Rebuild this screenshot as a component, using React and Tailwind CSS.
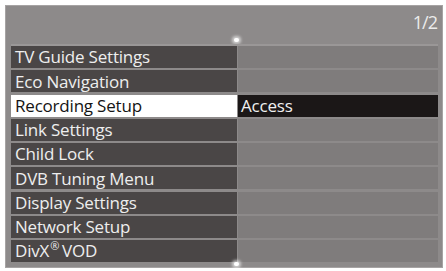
const items = [
  { label: "TV Guide Settings" },
  { label: "Eco Navigation" },
  { label: "Recording Setup", value: "Access", active: true },
  { label: "Link Settings" },
  { label: "Child Lock" },
  { label: "DVB Tuning Menu" },
  { label: "Display Settings" },
  { label: "Network Setup" },
  { label: "DivX", reg: true },
];

function Dot() {
  return <div className="w-[5px] h-[4px] rounded-full bg-white shadow-[0_0_3px_2px_rgba(255,255,255,0.6)]" />;
}

export default function App() {
  return (
    <div className="w-[446px] h-[271px] bg-white pt-[5px] pl-[5px] pr-[3px] pb-[3px]" style={{ fontFamily: '"Open Sans", "Liberation Sans", sans-serif' }}>
      <div className="h-full bg-[#8d8a8a] border border-[#a6a3a3] flex flex-col pl-[5px] pr-[4px]">
        {/* header */}
        <div className="h-[38px] shrink-0 flex flex-col">
          <div className="flex justify-end pt-[5px] pr-[1px] text-[18px] leading-[22px] font-medium text-[#ececec] tracking-[-1px]">1/2</div>
          <div className="flex-1" />
          <div className="flex w-[226px] justify-end pb-[2px]">
            <div className="-mr-[2px]"><Dot /></div>
          </div>
        </div>

        {/* menu rows */}
        <div className="flex flex-col shrink-0 gap-[2.25px] border-t-2 border-[#9a9797]">
          {items.map((it) => (
            <div key={it.label} className="flex h-[22px]">
              <div
                className={`w-[226px] flex items-center pl-[4px] text-[17px] font-medium tracking-[-0.2px] ${
                  it.active ? "bg-white text-[#141414]" : "bg-[#4a4646] text-[#eeeeee]"
                }`}
              >
                {it.label}
                {it.reg && (
                  <>
                    <sup className="text-[11px] ml-[1px] mr-[3px] -top-[5px]">®</sup>VOD
                  </>
                )}
              </div>
              <div
                className={`flex-1 ml-[1px] flex items-center pl-[3px] text-[17px] font-medium tracking-[-0.2px] ${
                  it.active ? "bg-[#1b1717] text-[#f0f0f0]" : "bg-[#7f7c7c]"
                }`}
              >
                {it.value}
              </div>
            </div>
          ))}
        </div>

        <div className="flex-1 flex items-end">
          <div className="flex w-[226px] justify-end pb-[1px]">
            <div className="-mr-[2px]"><Dot /></div>
          </div>
        </div>
      </div>
    </div>
  );
}
